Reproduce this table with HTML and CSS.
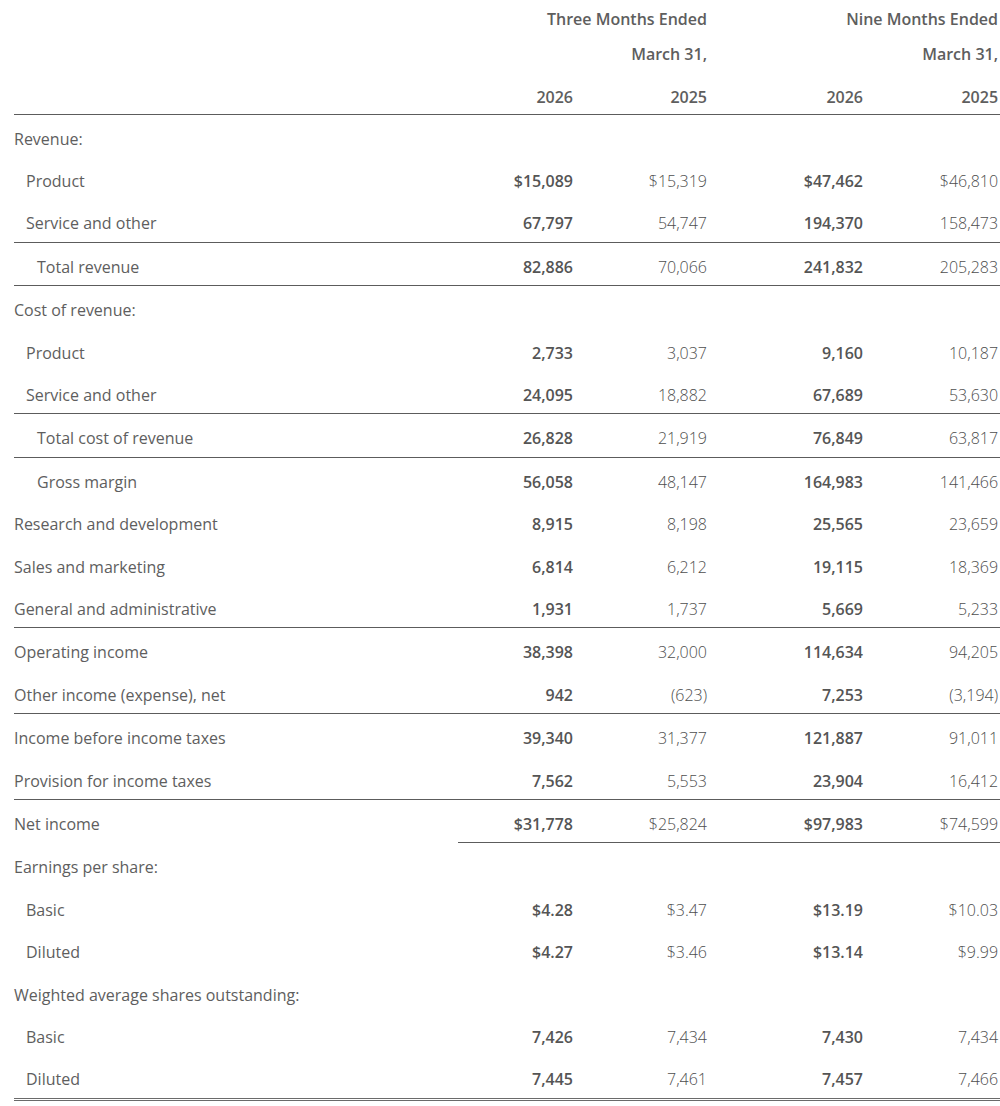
FILE: index.html
```html
<!DOCTYPE html>
<html lang="en">
<head>
<meta charset="utf-8">
<title>Income Statements</title>
<link rel="stylesheet" href="styles.css">
</head>
<body>
<table class="fin">
  <colgroup>
    <col class="c-label">
    <col class="c-a">
    <col class="c-sp1">
    <col class="c-b">
    <col class="c-c">
    <col class="c-sp2">
    <col class="c-d">
  </colgroup>
  <thead>
    <tr class="h1">
      <th></th>
      <th colspan="3">Three Months Ended</th>
      <th colspan="3">Nine Months Ended</th>
    </tr>
    <tr class="h2">
      <th></th>
      <th colspan="3">March 31,</th>
      <th colspan="3">March 31,</th>
    </tr>
    <tr class="h3">
      <th></th>
      <th>2026</th>
      <th></th>
      <th>2025</th>
      <th>2026</th>
      <th></th>
      <th>2025</th>
    </tr>
  </thead>
  <tbody>
    <tr><td class="l0">Revenue:</td><td class="cur"></td><td></td><td class="pri"></td><td class="cur"></td><td></td><td class="pri"></td></tr>
    <tr><td class="l1">Product</td><td class="cur">$15,089</td><td></td><td class="pri">$15,319</td><td class="cur">$47,462</td><td></td><td class="pri">$46,810</td></tr>
    <tr><td class="l1">Service and other</td><td class="cur">67,797</td><td></td><td class="pri">54,747</td><td class="cur">194,370</td><td></td><td class="pri">158,473</td></tr>
    <tr class="rule-top rule-bottom"><td class="l2">Total revenue</td><td class="cur">82,886</td><td></td><td class="pri">70,066</td><td class="cur">241,832</td><td></td><td class="pri">205,283</td></tr>
    <tr><td class="l0">Cost of revenue:</td><td class="cur"></td><td></td><td class="pri"></td><td class="cur"></td><td></td><td class="pri"></td></tr>
    <tr><td class="l1">Product</td><td class="cur">2,733</td><td></td><td class="pri">3,037</td><td class="cur">9,160</td><td></td><td class="pri">10,187</td></tr>
    <tr><td class="l1">Service and other</td><td class="cur">24,095</td><td></td><td class="pri">18,882</td><td class="cur">67,689</td><td></td><td class="pri">53,630</td></tr>
    <tr class="rule-top"><td class="l2">Total cost of revenue</td><td class="cur">26,828</td><td></td><td class="pri">21,919</td><td class="cur">76,849</td><td></td><td class="pri">63,817</td></tr>
    <tr class="rule-top"><td class="l2">Gross margin</td><td class="cur">56,058</td><td></td><td class="pri">48,147</td><td class="cur">164,983</td><td></td><td class="pri">141,466</td></tr>
    <tr><td class="l0">Research and development</td><td class="cur">8,915</td><td></td><td class="pri">8,198</td><td class="cur">25,565</td><td></td><td class="pri">23,659</td></tr>
    <tr><td class="l0">Sales and marketing</td><td class="cur">6,814</td><td></td><td class="pri">6,212</td><td class="cur">19,115</td><td></td><td class="pri">18,369</td></tr>
    <tr><td class="l0">General and administrative</td><td class="cur">1,931</td><td></td><td class="pri">1,737</td><td class="cur">5,669</td><td></td><td class="pri">5,233</td></tr>
    <tr class="rule-top"><td class="l0">Operating income</td><td class="cur">38,398</td><td></td><td class="pri">32,000</td><td class="cur">114,634</td><td></td><td class="pri">94,205</td></tr>
    <tr><td class="l0">Other income (expense), net</td><td class="cur">942</td><td></td><td class="pri">(623)</td><td class="cur">7,253</td><td></td><td class="pri">(3,194)</td></tr>
    <tr class="rule-top"><td class="l0">Income before income taxes</td><td class="cur">39,340</td><td></td><td class="pri">31,377</td><td class="cur">121,887</td><td></td><td class="pri">91,011</td></tr>
    <tr><td class="l0">Provision for income taxes</td><td class="cur">7,562</td><td></td><td class="pri">5,553</td><td class="cur">23,904</td><td></td><td class="pri">16,412</td></tr>
    <tr class="rule-top net"><td class="l0">Net income</td><td class="cur">$31,778</td><td></td><td class="pri">$25,824</td><td class="cur">$97,983</td><td></td><td class="pri">$74,599</td></tr>
    <tr><td class="l0">Earnings per share:</td><td class="cur"></td><td></td><td class="pri"></td><td class="cur"></td><td></td><td class="pri"></td></tr>
    <tr><td class="l1">Basic</td><td class="cur">$4.28</td><td></td><td class="pri">$3.47</td><td class="cur">$13.19</td><td></td><td class="pri">$10.03</td></tr>
    <tr><td class="l1">Diluted</td><td class="cur">$4.27</td><td></td><td class="pri">$3.46</td><td class="cur">$13.14</td><td></td><td class="pri">$9.99</td></tr>
    <tr><td class="l0">Weighted average shares outstanding:</td><td class="cur"></td><td></td><td class="pri"></td><td class="cur"></td><td></td><td class="pri"></td></tr>
    <tr><td class="l1">Basic</td><td class="cur">7,426</td><td></td><td class="pri">7,434</td><td class="cur">7,430</td><td></td><td class="pri">7,434</td></tr>
    <tr class="rule-double"><td class="l1">Diluted</td><td class="cur">7,445</td><td></td><td class="pri">7,461</td><td class="cur">7,457</td><td></td><td class="pri">7,466</td></tr>
  </tbody>
</table>
</body>
</html>
```
FILE: styles.css
```css
html, body {
  margin: 0;
  padding: 0;
  background: #ffffff;
}

body {
  font-family: "Open Sans", "Noto Sans", "Liberation Sans", sans-serif;
  font-size: 16px;
  color: #5e5e5e;
}

.fin {
  margin-left: 14px;
  width: 986px;
  border-collapse: collapse;
  table-layout: fixed;
}

.c-label { width: 444px; }
.c-a { width: 117px; }
.c-sp1 { width: 28px; }
.c-b { width: 106px; }
.c-c { width: 156px; }
.c-sp2 { width: 29px; }
.c-d { width: 106px; }

.fin th {
  font-weight: 600;
  text-align: right;
  line-height: 24px;
  padding: 7px 2px 0 0;
  vertical-align: top;
  color: #5e5e5e;
  white-space: nowrap;
}

.fin .h1 th { height: 28px; }
.fin .h2 th { height: 27.5px; }
.fin .h3 th {
  height: 23px;
  padding-top: 15px;
  padding-bottom: 5px;
  border-bottom: 1px solid #5c5c5c;
}

.fin td {
  line-height: 24px;
  padding: 12px 2px 6.42px 0;
  vertical-align: top;
  text-align: right;
  white-space: nowrap;
  height: 24px;
}

.fin td.l0, .fin td.l1, .fin td.l2 {
  text-align: left;
  font-weight: 400;
}

.fin td.l0 { padding-left: 0; }
.fin td.l1 { padding-left: 12px; }
.fin td.l2 { padding-left: 23px; }

.fin td.cur {
  font-weight: 600;
  color: #555555;
}

.fin td.pri {
  font-weight: 300;
  color: #4e4e4e;
}

.fin tr.rule-top td {
  border-top: 1px solid #5c5c5c;
}

.fin tr.rule-bottom td {
  border-bottom: 1px solid #5c5c5c;
}

.fin tr.net td:not(:first-child) {
  border-bottom: 1px solid #5c5c5c;
}

.fin tr.rule-double td {
  border-bottom: 3px double #6a6a6a;
}
```
